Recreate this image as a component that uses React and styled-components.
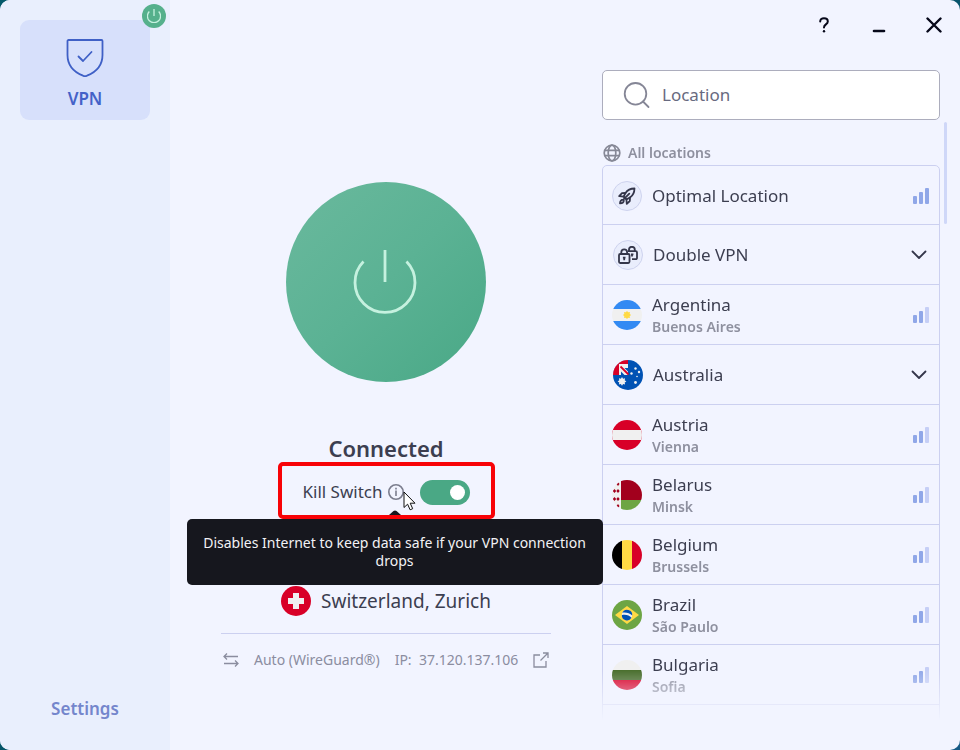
import React, { useState } from "react";
import styled, { createGlobalStyle } from "styled-components";

const GlobalStyle = createGlobalStyle`
  * {
    box-sizing: border-box;
  }

  body {
    margin: 0;
    background: linear-gradient(135deg, #045a6b 0%, #055468 50%, #155a85 100%);
    font-family: "Noto Sans", "Open Sans", sans-serif;
    color: #3c3e50;
  }

  button, input {
    font-family: inherit;
    color: inherit;
  }

  button {
    border: none;
    background: none;
    padding: 0;
    cursor: pointer;
  }

  svg {
    display: block;
    flex-shrink: 0;
  }
`;

const Window = styled.div`
  display: grid;
  grid-template-columns: 170px minmax(420px, 1fr) minmax(300px, 358px);
  height: 100vh;
  min-height: 700px;
  border-radius: 10px;
  overflow: hidden;
  background: #f2f4ff;
`;

const Sidebar = styled.nav`
  display: flex;
  flex-direction: column;
  align-items: center;
  justify-content: space-between;
  padding: 20px 20px 29px;
  background: #e9effd;
`;

const NavCard = styled.button`
  position: relative;
  display: flex;
  flex-direction: column;
  align-items: center;
  gap: 9px;
  width: 100%;
  height: 100px;
  padding-top: 18px;
  border-radius: 9px;
  background: #d7e0fb;
  color: #4462c8;
  font-size: 17px;
  line-height: 24px;
  font-weight: 600;
`;

const Badge = styled.span`
  position: absolute;
  top: -16px;
  right: -16px;
  display: grid;
  place-items: center;
  width: 24px;
  height: 24px;
  border-radius: 50%;
  background: #55b08c;
`;

const SettingsButton = styled.button`
  color: #7486cc;
  font-size: 17px;
  line-height: 24px;
  font-weight: 600;
`;

const Main = styled.main`
  display: flex;
  flex-direction: column;
  align-items: center;
  padding-top: 182px;
`;

const PowerButton = styled.button`
  display: grid;
  place-items: center;
  width: 200px;
  height: 200px;
  padding-right: 2px;
  border-radius: 50%;
  background: linear-gradient(135deg, #6ab99d 0%, #5bb294 50%, #49a886 100%);
`;

const Status = styled.h1`
  margin: 52px 0 0;
  font-size: 22px;
  line-height: 28px;
  font-weight: 600;
`;

const KillSwitch = styled.div`
  position: relative;
  display: flex;
  align-items: center;
  justify-content: center;
  width: 217px;
  height: 57px;
  padding-top: 3px;
  border: 4px solid #f80207;
  border-radius: 5px;
  font-size: 17px;
  line-height: 24px;
`;

const InfoButton = styled.button`
  position: relative;
  margin: 0 16px 0 5px;
`;

const Cursor = styled.svg`
  position: absolute;
  top: 7px;
  left: 15px;
`;

const Toggle = styled.input`
  appearance: none;
  display: flex;
  align-items: center;
  width: 50px;
  height: 25px;
  margin: 0;
  padding: 0 5px;
  border-radius: 13px;
  background: ${(props) => (props.checked ? "#4aa885" : "#b4b8cc")};
  justify-content: ${(props) => (props.checked ? "flex-end" : "flex-start")};
  cursor: pointer;

  &::before {
    content: "";
    width: 15px;
    height: 15px;
    border-radius: 50%;
    background: #fff;
  }
`;

const Tooltip = styled.div`
  position: absolute;
  z-index: 2;
  top: 53px;
  left: -95px;
  width: 416px;
  padding: 15px 12px;
  border-radius: 5px;
  background: #16171e;
  color: #f2f2f5;
  font-size: 14px;
  line-height: 18px;
  text-align: center;
`;

const TooltipArrow = styled.svg`
  position: absolute;
  top: 44px;
  left: 105px;
`;

const Place = styled.div`
  display: flex;
  align-items: center;
  gap: 10px;
  margin-top: 67px;
  font-size: 19px;
  line-height: 30px;
`;

const Details = styled.footer`
  display: flex;
  align-items: center;
  width: 330px;
  margin-top: 17px;
  padding: 14px 2px 0;
  border-top: 1px solid #ccd0f0;
  color: #8b8d9f;
  font-size: 14px;
  line-height: 24px;
  white-space: nowrap;
`;

const Protocol = styled.span`
  margin: 0 15px;
`;

const Address = styled.a`
  display: flex;
  flex: 1;
  align-items: center;
  justify-content: space-between;
  color: inherit;
  text-decoration: none;
`;

const Panel = styled.aside`
  display: flex;
  flex-direction: column;
  min-height: 0;
`;

const TitleBar = styled.div`
  display: flex;
  justify-content: flex-end;
  gap: 7px;
  padding-right: 2px;
`;

const TitleButton = styled.button`
  display: grid;
  place-items: center;
  width: 48px;
  height: 50px;
`;

const SearchBox = styled.label`
  display: flex;
  align-items: center;
  gap: 12px;
  height: 50px;
  margin: 20px 20px 0 0;
  padding: 0 20px;
  border: 1px solid #acadbd;
  border-radius: 5px;
  background: #fff;
`;

const SearchInput = styled.input`
  flex: 1;
  min-width: 0;
  border: none;
  outline: none;
  padding: 0;
  background: none;
  font-size: 17px;
  line-height: 24px;

  &::placeholder {
    color: #686a80;
    opacity: 1;
  }
`;

const Results = styled.div`
  display: flex;
  flex: 1;
  min-height: 0;
  gap: 4px;
  margin: 2px 13px 30px 0;
`;

const ScrollArea = styled.section`
  flex: 1;
  overflow: hidden;
  mask-image: linear-gradient(to top, transparent, #000 50px);
`;

const ScrollThumb = styled.div`
  width: 3px;
  height: 102px;
  border-radius: 2px;
  background: #cfd7f8;
`;

const ListTitle = styled.h2`
  display: flex;
  align-items: center;
  gap: 7px;
  margin: 19px 0 0 1px;
  color: #8e909f;
  font-size: 14px;
  line-height: 24px;
  font-weight: 600;
`;

const List = styled.ul`
  min-height: 100%;
  margin: 0;
  padding: 0;
  list-style: none;
  border: 1px solid #ccd0f0;
  border-radius: 5px;
`;

const Row = styled.li`
  height: 60px;
  border-bottom: 1px solid #ccd0f0;

  &:first-child {
    height: 59px;
  }
`;

const RowButton = styled.button`
  display: flex;
  align-items: center;
  gap: 10px;
  width: 100%;
  height: 100%;
  padding: 1px ${(props) => (props.$group ? "12px" : "10px")} 0
    ${(props) => (props.$group ? "10px" : "9px")};
  text-align: left;
`;

const RowText = styled.span`
  display: flex;
  flex: 1;
  flex-direction: column;
`;

const Name = styled.span`
  font-size: 17px;
  line-height: 24px;
`;

const City = styled.span`
  color: #8e909f;
  font-size: 14px;
  line-height: 20px;
  font-weight: 600;
`;

const RoundIcon = styled.span`
  display: grid;
  place-items: center;
  width: 30px;
  height: 30px;
  border: 1px solid #cdd2ee;
  border-radius: 50%;
  background: #e9edfc;
`;

const Power = ({ size, width }) => (
  <svg width={size} height={size} viewBox="0 0 64 64" fill="none" stroke="#c5f1df" strokeWidth={width}>
    <path d="M10.500 11.500a30 30 0 1 0 43 0" />
    <path d="M32 0v32" />
  </svg>
);

const Signal = ({ level }) => (
  <svg width="16" height="16" viewBox="0 0 16 16">
    {[8, 12, 16].map((h, i) => (
      <rect
        key={h}
        x={i * 6}
        y={16 - h}
        width="4"
        height={h}
        rx="1"
        fill={i < level ? "#90a7e8" : "#c6cff6"}
      />
    ))}
  </svg>
);

const Chevron = () => (
  <svg width="16" height="10" viewBox="0 0 16 10" fill="none" stroke="#34364a" strokeWidth="1.8" strokeLinecap="round" strokeLinejoin="round">
    <path d="M1.500 1.500 8 8l6.500-6.500" />
  </svg>
);

const Rocket = () => (
  <svg width="18" height="18" viewBox="0 0 18 18" fill="none" stroke="#34364a" strokeWidth="1.800" strokeLinejoin="round" strokeLinecap="round">
    <path d="M16.500 1.500C12 1.600 9.500 3 7.500 6L5.600 9.600l2.800 2.800 3.600-1.900c3-2 4.400-4.500 4.500-9z" />
    <path d="M7.500 6 4 6.200 1.200 9.200l4.400.4M12 10.500l-.2 3.500-3 2.800-.4-4.400" />
    <path d="M11.300 6.700 5.600 12.400M5 12.600c-1.800 0-2.800 1.500-3 3.800 2.300-.2 3.800-1.200 3.800-3" />
  </svg>
);

const Locks = () => (
  <svg width="20" height="18" viewBox="0 0 20 18" fill="none" stroke="#34364a" strokeWidth="1.800" strokeLinejoin="round">
    <rect x="1" y="8" width="10.500" height="9" rx="1.200" />
    <path d="M3.300 8V6.200a2.900 2.900 0 0 1 5.800 0V8M6.200 11v3.200M4.900 11.600h2.600" />
    <path d="M9.800 5.200h8a1.200 1.200 0 0 1 1.200 1.200v5.600a1.200 1.200 0 0 1-1.200 1.200H14M11 5V3.700a2.900 2.900 0 0 1 5.800 0V5M14 8v2.500M13 8.400h2.400" />
  </svg>
);

const flagArt = {
  ar: (
    <>
      <path fill="#f0f0f0" d="M0 0h30v30H0z" />
      <path fill="#338af3" d="M0 0h30v9H0zM0 21h30v9H0z" />
      <path fill="#ffda44" d="m15 11 1.200 1.300 1.700-.2-.2 1.700L19 15l-1.300 1.200.2 1.700-1.700-.2L15 19l-1.200-1.300-1.700.2.200-1.700L11 15l1.300-1.200-.2-1.700 1.700.2z" />
    </>
  ),
  au: (
    <>
      <path fill="#0052b4" d="M0 0h30v30H0z" />
      <path fill="#f0f0f0" d="M0 0h15v15H0z" />
      <path fill="#d80027" d="M0 0h15v4H6v11H0z" />
      <path fill="#0052b4" d="M8 15v-3.500L11.500 15zM11.500 8H15v3.500z" />
      <path stroke="#d80027" strokeWidth="1.800" d="m7.500 6.500 8 8" />
      <path fill="#f0f0f0" d="m9 17 1.100 1.700 2-.4-.4 2 1.700 1.100-1.700 1.100.4 2-2-.4L9 25.800l-1.100-1.700-2 .4.4-2-1.700-1.100 1.700-1.100-.4-2 2 .4z" />
      <g fill="#f0f0f0">
        <circle cx="22.500" cy="8.500" r="1.200" />
        <circle cx="18.500" cy="13.500" r="1.200" />
        <circle cx="26" cy="12" r="1.200" />
        <circle cx="22.500" cy="22.500" r="1.400" />
        <circle cx="24" cy="16.500" r="0.800" />
      </g>
    </>
  ),
  at: (
    <>
      <path fill="#d80027" d="M0 0h30v30H0z" />
      <path fill="#f0f0f0" d="M0 10h30v10H0z" />
    </>
  ),
  by: (
    <>
      <path fill="#f0f0f0" d="M0 0h30v30H0z" />
      <path fill="#a2001d" d="M9 0h21v20H9z" />
      <path fill="#6da544" d="M9 20h21v10H9z" />
      <g fill="#a2001d">
        <path d="m2.500 9 1.700 2-1.700 2-1.700-2zM6 9l1.700 2L6 13l-1.700-2zM2.500 17l1.700 2-1.700 2-1.700-2zM6 17l1.700 2L6 21l-1.700-2z" />
        <path d="m6 2 1.500 2L6 6 4.500 4zM6 24l1.500 2L6 28l-1.500-2z" />
      </g>
    </>
  ),
  be: (
    <>
      <path fill="#000" d="M0 0h10v30H0z" />
      <path fill="#ffda44" d="M10 0h10v30H10z" />
      <path fill="#d80027" d="M20 0h10v30H20z" />
    </>
  ),
  br: (
    <>
      <path fill="#6da544" d="M0 0h30v30H0z" />
      <path fill="#ffda44" d="m15 6 12 9-12 9-12-9z" />
      <circle cx="15" cy="15" r="5.200" fill="#f0f0f0" />
      <path fill="#0052b4" d="M12.500 14.800c2.900 0 5.300 1.100 7 3A5.200 5.200 0 0 1 9.800 15.200c.8-.3 1.700-.4 2.700-.4zM20.200 15.600A5.200 5.200 0 0 0 10.300 12.800c3.700-.7 7.500.4 9.900 2.800z" />
    </>
  ),
  bg: (
    <>
      <path fill="#f0f0f0" d="M0 0h30v10H0z" />
      <path fill="#496e2d" d="M0 10h30v10H0z" />
      <path fill="#d80027" d="M0 20h30v10H0z" />
    </>
  ),
  ch: (
    <>
      <path fill="#d80027" d="M0 0h30v30H0z" />
      <path fill="#f0f0f0" d="M12 7h6v5h5v6h-5v5h-6v-5H7v-6h5z" />
    </>
  ),
};

const Flag = ({ code }) => (
  <svg width="30" height="30" viewBox="0 0 30 30">
    <clipPath id={`clip-${code}`}>
      <circle cx="15" cy="15" r="15" />
    </clipPath>
    <g clipPath={`url(#clip-${code})`}>{flagArt[code]}</g>
  </svg>
);

const locations = [
  { name: "Optimal Location", icon: <Rocket />, level: 3 },
  { name: "Double VPN", icon: <Locks />, group: true },
  { name: "Argentina", city: "Buenos Aires", flag: "ar", level: 2 },
  { name: "Australia", flag: "au", group: true },
  { name: "Austria", city: "Vienna", flag: "at", level: 2 },
  { name: "Belarus", city: "Minsk", flag: "by", level: 2 },
  { name: "Belgium", city: "Brussels", flag: "be", level: 2 },
  { name: "Brazil", city: "São Paulo", flag: "br", level: 2 },
  { name: "Bulgaria", city: "Sofia", flag: "bg", level: 2 },
];

const App = () => {
  const [killSwitch, setKillSwitch] = useState(true);
  const [query, setQuery] = useState("");

  const shown = locations.filter((item) =>
    item.name.toLowerCase().includes(query.toLowerCase())
  );

  return (
    <>
      <GlobalStyle />
      <Window>
        <Sidebar>
          <NavCard>
            <svg width="38" height="40" viewBox="0 0 38 40" fill="none" stroke="#3f60c6" strokeWidth="1.800" strokeLinecap="round" strokeLinejoin="round">
              <path d="M2.500 2h33a1 1 0 0 1 1 1v14c0 11-7.500 17.500-15.500 20.700a5 5 0 0 1-4 0C9 34.500 1.500 28 1.500 17V3a1 1 0 0 1 1-1z" />
              <path d="m12.500 18.500 4.500 4.500 8.500-9" />
            </svg>
            VPN
            <Badge>
              <Power size={14} width={6} />
            </Badge>
          </NavCard>
          <SettingsButton>Settings</SettingsButton>
        </Sidebar>

        <Main>
          <PowerButton aria-label="Disconnect">
            <Power size={64} width={2.8} />
          </PowerButton>
          <Status>Connected</Status>
          <KillSwitch>
            <label htmlFor="kill-switch">Kill Switch</label>
            <InfoButton aria-label="About Kill Switch" aria-describedby="kill-switch-tip">
              <svg width="16" height="16" viewBox="0 0 16 16" fill="none" stroke="#7b7d8e" strokeWidth="1.600">
                <circle cx="8" cy="8" r="7.200" />
                <path d="M8 6.500V12M8 3.800v1.600" />
              </svg>
              <Cursor width="13" height="20" viewBox="0 0 13 20" fill="#fff" stroke="#111" strokeLinejoin="round">
                <path d="M1 1v15.500l3.600-3.300 2.500 5.600 2.600-1.100-2.500-5.500H12z" />
              </Cursor>
            </InfoButton>
            <Toggle
              id="kill-switch"
              type="checkbox"
              role="switch"
              checked={killSwitch}
              onChange={(e) => setKillSwitch(e.target.checked)}
            />
            <TooltipArrow width="16" height="5" viewBox="0 0 16 5" fill="#16171e">
              <path d="M2 5 6.500 1q1.500-1 3 0L14 5z" />
            </TooltipArrow>
            <Tooltip id="kill-switch-tip" role="tooltip">
              Disables Internet to keep data safe if your VPN connection drops
            </Tooltip>
          </KillSwitch>
          <Place>
            <Flag code="ch" />
            Switzerland, Zurich
          </Place>
          <Details>
            <svg width="16" height="14" viewBox="0 0 16 14" fill="none" stroke="#8b8d9f" strokeWidth="1.300">
              <path d="M15 3.500H1M4 .5l-3 3 3 3M1 10.500h14M12 7.500l3 3-3 3" />
            </svg>
            <Protocol>Auto (WireGuard®)</Protocol>
            <Address href="#ip">
              <span>IP:&nbsp; 37.120.137.106</span>
              <svg width="16" height="16" viewBox="0 0 16 16" fill="none" stroke="#8b8d9f" strokeWidth="1.300">
                <path d="M7 3H1v12h12V9M10 1h5v5M15 1 7.500 8.500" />
              </svg>
            </Address>
          </Details>
        </Main>

        <Panel>
          <TitleBar>
            <TitleButton aria-label="Help">
              <svg width="10" height="16" viewBox="0 0 10 16" fill="none" stroke="#07081a" strokeWidth="2" strokeLinecap="round">
                <path d="M1.200 4.500C1.200 2.500 2.700 1.200 5 1.200s3.800 1.300 3.800 3.200c0 3-3.800 3-3.800 6" />
                <path d="M5 14.200v.1" strokeWidth="2.400" />
              </svg>
            </TitleButton>
            <TitleButton aria-label="Minimize">
              <svg width="14" height="16" viewBox="0 0 14 16" stroke="#07081a" strokeWidth="2.600" strokeLinecap="round">
                <path d="M2 14h10" />
              </svg>
            </TitleButton>
            <TitleButton aria-label="Close">
              <svg width="16" height="16" viewBox="0 0 16 16" stroke="#07081a" strokeWidth="2.400" strokeLinecap="round">
                <path d="m1.500 1.500 13 13M14.500 1.500l-13 13" />
              </svg>
            </TitleButton>
          </TitleBar>
          <SearchBox>
            <svg width="27" height="27" viewBox="0 0 27 27" fill="none" stroke="#858696" strokeWidth="1.800" strokeLinecap="round">
              <circle cx="12.500" cy="11.800" r="10.800" />
              <path d="m20 19.500 5.500 5.500" />
            </svg>
            <SearchInput
              type="text"
              placeholder="Location"
              aria-label="Location"
              value={query}
              onChange={(e) => setQuery(e.target.value)}
            />
          </SearchBox>
          <Results>
            <ScrollArea>
              <ListTitle>
                <svg width="18" height="18" viewBox="0 0 18 18" fill="none" stroke="#868896" strokeWidth="1.700">
                  <circle cx="9" cy="9" r="7.800" />
                  <ellipse cx="9" cy="9" rx="3.800" ry="7.800" />
                  <path d="M1.500 6.300h15M1.500 11.700h15" />
                </svg>
                All locations
              </ListTitle>
              <List>
                {shown.map((item) => (
                  <Row key={item.name}>
                    <RowButton $group={item.group}>
                      {item.flag ? <Flag code={item.flag} /> : <RoundIcon>{item.icon}</RoundIcon>}
                      <RowText>
                        <Name>{item.name}</Name>
                        {item.city && <City>{item.city}</City>}
                      </RowText>
                      {item.group ? <Chevron /> : <Signal level={item.level} />}
                    </RowButton>
                  </Row>
                ))}
              </List>
            </ScrollArea>
            <ScrollThumb />
          </Results>
        </Panel>
      </Window>
    </>
  );
};

export default App;
